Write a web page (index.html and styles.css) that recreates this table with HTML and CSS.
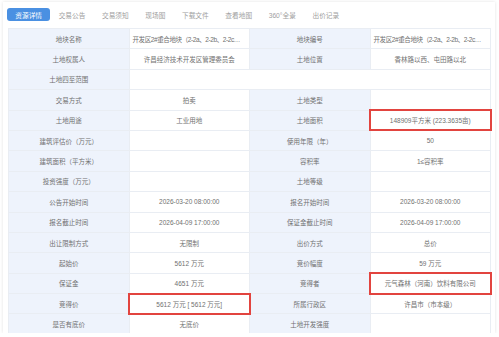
FILE: index.html
```html
<!DOCTYPE html>
<html lang="zh">
<head>
<meta charset="utf-8">
<link rel="stylesheet" href="styles.css">
</head>
<body>
<div class="card">
  <div class="tabs">
    <span class="tab active">资源详情</span>
    <span class="tab">交易公告</span>
    <span class="tab">交易须知</span>
    <span class="tab">现场图</span>
    <span class="tab">下载文件</span>
    <span class="tab">查看地图</span>
    <span class="tab">360°全景</span>
    <span class="tab">出价记录</span>
  </div>
  <table class="grid">
    <colgroup><col class="c"><col class="c"><col class="c"><col class="c"></colgroup>
    <tr><th>地块名称</th><td class="left">开发区2#重合地块（2-2a、2-2b、2-2c、2-2d、2-2e）</td><th>地块编号</th><td class="left">开发区2#重合地块（2-2a、2-2b、2-2c、2-2d、2-2e）</td></tr>
    <tr><th>土地权属人</th><td>许昌经济技术开发区管理委员会</td><th>土地位置</th><td>香林路以西、屯田路以北</td></tr>
    <tr><th>土地四至范围</th><td colspan="3"></td></tr>
    <tr><th>交易方式</th><td>拍卖</td><th>土地类型</th><td></td></tr>
    <tr><th>土地用途</th><td>工业用地</td><th>土地面积</th><td class="mark">148909平方米 (223.3635亩)</td></tr>
    <tr><th>建筑评估价（万元）</th><td></td><th>使用年限（年）</th><td>50</td></tr>
    <tr><th>建筑面积（平方米）</th><td></td><th>容积率</th><td>1≤容积率</td></tr>
    <tr><th>投资强度（万元）</th><td></td><th>土地等级</th><td></td></tr>
    <tr><th>公告开始时间</th><td>2026-03-20 08:00:00</td><th>报名开始时间</th><td>2026-03-20 08:00:00</td></tr>
    <tr><th>报名截止时间</th><td>2026-04-09 17:00:00</td><th>保证金截止时间</th><td>2026-04-09 17:00:00</td></tr>
    <tr><th>出让限制方式</th><td>无限制</td><th>出价方式</th><td>总价</td></tr>
    <tr><th>起始价</th><td>5612 万元</td><th>竞价幅度</th><td>59 万元</td></tr>
    <tr><th>保证金</th><td>4651 万元</td><th>竞得者</th><td class="mark">元气森林（河南）饮料有限公司</td></tr>
    <tr><th>竞得价</th><td class="mark">5612 万元 [ 5612 万元]</td><th>所属行政区</th><td>许昌市（市本级）</td></tr>
    <tr><th>是否有底价</th><td>无底价</td><th>土地开发强度</th><td></td></tr>
  </table>
</div>
</body>
</html>
```

FILE: styles.css
```css
html, body {
  margin: 0;
  padding: 0;
  background: #ffffff;
}
body {
  font-family: "Liberation Sans", "Noto Sans CJK SC", sans-serif;
  color: #777;
}
.card {
  margin: 2px 4px 0 3px;
  padding: 6px 5px 4px 4px;
  background: #fff;
  box-shadow: 0 0 3px rgba(0, 0, 0, 0.12);
  height: 331px;
  box-sizing: border-box;
}
.tabs {
  display: flex;
  height: 13px;
  margin-bottom: 7px;
}
.tab {
  display: flex;
  align-items: center;
  padding: 0 8.3px;
  font-size: 6.7px;
  color: #a0a0a0;
  white-space: nowrap;
}
.tab.active {
  background: #4a90e2;
  color: #fff;
  border-radius: 3px;
}
.grid {
  width: 482px;
  table-layout: fixed;
  border-collapse: collapse;
  font-size: 6.5px;
  margin-left: 1px;
}
.grid .c { width: 120.5px; }
.grid th, .grid td {
  height: 20.4px;
  padding: 0 4px;
  box-sizing: border-box;
  border: 1px solid #e9edf3;
  text-align: center;
  font-weight: normal;
  white-space: nowrap;
  overflow: hidden;
  text-overflow: ellipsis;
}
.grid th {
  background: #eef3fc;
  color: #707070;
}
.grid td {
  background: #fff;
  color: #707070;
}
.grid td.left {
  text-align: left;
  padding-left: 3px;
  letter-spacing: -0.4px;
}
.grid td.mark {
  outline: 2px solid #e2443f;
  outline-offset: -1px;
  position: relative;
}
```
